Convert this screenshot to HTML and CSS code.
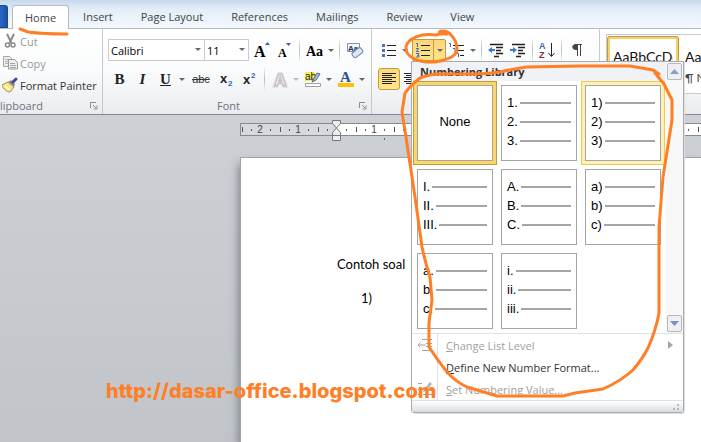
FILE: index.html
```
<!DOCTYPE html>
<html lang="en">
<head>
  <meta charset="utf-8">
  <meta name="viewport" content="width=device-width, initial-scale=1.0">
  <title>Numbering Library</title>
  <link rel="stylesheet" href="styles.css">
</head>
<body>
  <nav class="tabs">
    <button class="file-tab" aria-label="File"></button>
    <a href="#" class="tab active">Home</a>
    <a href="#" class="tab">Insert</a>
    <a href="#" class="tab">Page Layout</a>
    <a href="#" class="tab">References</a>
    <a href="#" class="tab">Mailings</a>
    <a href="#" class="tab">Review</a>
    <a href="#" class="tab">View</a>
  </nav>

  <div class="ribbon">
    <!-- Clipboard -->
    <section class="group clipboard">
      <div class="commands">
        <button class="command" disabled>
          <svg width="16" height="16" viewBox="0 0 16 16"><path d="M5 1l4.500 9M12 1L7.500 10" stroke="#8b8b8b" stroke-width="2" fill="none"/><circle cx="5.500" cy="12" r="2" fill="none" stroke="#8b8b8b" stroke-width="1.500"/><circle cx="11" cy="12" r="2" fill="none" stroke="#8b8b8b" stroke-width="1.500"/></svg>
          Cut
        </button>
        <button class="command" disabled>
          <svg width="16" height="16" viewBox="0 0 16 16"><path d="M1.500 1.500h6l2 2v8h-8z" fill="#eee" stroke="#a5a5a5"/><path d="M3 4.500h4M3 6.500h4M3 8.500h3" stroke="#b0b0b0"/><path d="M6.500 4.500h6l3 3v6.500h-9z" fill="#eee" stroke="#9a9a9a"/><path d="M8 8.500h5M8 10.500h6M8 12.500h6" stroke="#a5a5a5"/></svg>
          Copy
        </button>
        <button class="command">
          <svg width="16" height="16" viewBox="0 0 16 16"><path d="M0 8l6-3 6 5-4 5c-3 0-7-3-8-7z" fill="#f7e48a" stroke="#a98f3a"/><path d="M3 9l5 4" stroke="#fffbd8" stroke-width="2"/><path d="M6 5l3-2 4 4-1 3z" fill="#8d8d8d"/><path d="M11 5l3-3" stroke="#3f479c" stroke-width="3" stroke-linecap="round"/></svg>
          Format Painter
        </button>
      </div>
      <div class="group-label"><span>Clipboard</span><button class="launcher" aria-label="Clipboard options"><svg width="8" height="8"><path d="M.5 6V.5H6M3 3l3 3M7 3.500V7H3.500" fill="none" stroke="#8a8f96"/></svg></button></div>
    </section>

    <!-- Font -->
    <section class="group font">
      <div class="row">
        <label class="combo font-name"><select aria-label="Font"><option>Calibri</option></select><i class="arrow"></i></label>
        <label class="combo font-size"><select aria-label="Font size"><option>11</option></select><i class="arrow"></i></label>
        <button class="tool" aria-label="Grow font"><svg width="18" height="20"><text x="1" y="17" class="serif" font-size="16">A</text><path d="M12 5l2.500-3L17 5z" fill="#3a5fb0"/></svg></button>
        <button class="tool" aria-label="Shrink font"><svg width="18" height="20"><text x="2" y="17" class="serif" font-size="12">A</text><path d="M10 3h5l-2.500 3z" fill="#3a5fb0"/></svg></button>
        <i class="sep"></i>
        <button class="tool" aria-label="Change case"><svg width="20" height="20"><text x="1" y="16" class="serif" font-size="14">Aa</text></svg></button>
        <button class="drop" aria-label="Change case options"><i class="arrow"></i></button>
        <i class="sep"></i>
        <button class="tool" aria-label="Clear formatting"><svg width="18" height="18"><path d="M1.500 2.500h12v8h-12z" fill="#f4f8fd" stroke="#7d93b5"/><text x="2" y="10" font-size="8" font-weight="bold" fill="#27364f">Aa</text><rect x="6" y="9" width="11" height="6" rx="2" transform="rotate(-38 11 12)" fill="#dbe7f5" stroke="#6a83a8"/></svg></button>
      </div>
      <div class="row">
        <button class="tool letter"><b>B</b></button>
        <button class="tool letter"><em>I</em></button>
        <button class="tool letter"><u>U</u></button>
        <button class="drop" aria-label="Underline options"><i class="arrow"></i></button>
        <button class="tool strike"><s>abc</s></button>
        <button class="tool script" aria-label="Subscript"><svg width="16" height="18"><text x="1" y="13" font-size="13" font-weight="bold" fill="#222">x</text><text x="9" y="16" font-size="8" font-weight="bold" fill="#3a5fb0">2</text></svg></button>
        <button class="tool script" aria-label="Superscript"><svg width="16" height="18"><text x="1" y="14" font-size="13" font-weight="bold" fill="#222">x</text><text x="9" y="8" font-size="8" font-weight="bold" fill="#3a5fb0">2</text></svg></button>
        <i class="sep"></i>
        <button class="tool" aria-label="Text effects" disabled><svg width="18" height="20"><text x="3" y="17" font-size="17" font-weight="bold" fill="#fff" stroke="#dedade" stroke-width="3">A</text><text x="3" y="17" font-size="17" font-weight="bold" fill="#f8f8f8" stroke="#bcb7bf">A</text></svg></button>
        <button class="drop" aria-label="Text effects options" disabled><i class="arrow"></i></button>
        <button class="tool" aria-label="Highlight"><svg width="18" height="18"><path d="M1 2h10v9H1z" fill="#f5f04a"/><text x="1" y="10" font-size="10" fill="#222">ab</text><path d="M9 10l4-7 3 1-4 6-4 2z" fill="#a9bfdf" stroke="#4d668f"/><path d="M1.500 13.500h15v3h-15z" fill="#fff" stroke="#a0a0a0"/></svg></button>
        <button class="drop" aria-label="Highlight colors"><i class="arrow"></i></button>
        <button class="tool" aria-label="Font color"><svg width="18" height="18"><text x="3" y="12" class="serif" font-size="15" fill="#2f5291">A</text><path d="M1 13h16v4H1z" fill="#ffc000"/></svg></button>
        <button class="drop" aria-label="Font colors"><i class="arrow"></i></button>
      </div>
      <div class="group-label"><span>Font</span><button class="launcher" aria-label="Font options"><svg width="8" height="8"><path d="M.5 6V.5H6M3 3l3 3M7 3.500V7H3.500" fill="none" stroke="#8a8f96"/></svg></button></div>
    </section>

    <!-- Paragraph -->
    <section class="group paragraph">
      <div class="row">
        <button class="tool" aria-label="Bullets"><svg width="16" height="16"><path d="M1 2h3v3H1zM1 7h3v3H1zM1 12h3v3H1z" fill="#4d74b8"/><path d="M6 3.500h9M6 8.500h9M6 13.500h9" stroke="#222"/></svg></button>
        <button class="drop" aria-label="Bullet options"><i class="arrow"></i></button>
        <div class="split">
          <button class="split-main" aria-label="Numbering"><svg width="16" height="16"><path d="M1 1.500h1.500V5M1 6.500h2.500L1.500 9.500H4M1 11.500h3l-1.500 2h1.500v1.500H1" fill="none" stroke="#3f68b0"/><path d="M6 3.500h9M6 8.500h9M6 13.500h9" stroke="#222"/></svg></button>
          <button class="split-drop" aria-label="Numbering library"><i class="arrow"></i></button>

          <div class="menu">
            <div class="library">
              <div class="library-main">
                <h2>Numbering Library</h2>
                <div class="formats">
                  <button class="format none selected">None</button>
                  <button class="format"><span>1.</span><span>2.</span><span>3.</span></button>
                  <button class="format hover"><span>1)</span><span>2)</span><span>3)</span></button>
                  <button class="format"><span>I.</span><span>II.</span><span>III.</span></button>
                  <button class="format"><span>A.</span><span>B.</span><span>C.</span></button>
                  <button class="format"><span>a)</span><span>b)</span><span>c)</span></button>
                  <button class="format"><span>a.</span><span>b.</span><span>c.</span></button>
                  <button class="format"><span>i.</span><span>ii.</span><span>iii.</span></button>
                </div>
              </div>
              <div class="scroller">
                <button aria-label="Scroll up"><svg width="9" height="5"><path d="M0 5l4.500-5L9 5z" fill="#8e9cc4"/></svg></button>
                <button aria-label="Scroll down"><svg width="9" height="5"><path d="M0 0h9L4.500 5z" fill="#7f90c0"/></svg></button>
              </div>
            </div>
            <div class="menu-items">
              <button class="menu-item" disabled>
                <span class="menu-icon"><svg width="16" height="14"><path d="M5 1.500h10M9 5.500h6M9 8.500h6M5 12.500h10M1 7h8M3.500 4.500L1 7l2.500 2.500" fill="none" stroke="#a5a5a5"/></svg></span>
                <span><u>C</u>hange List Level</span>
                <svg class="more" width="5" height="8"><path d="M0 0l5 4-5 4z" fill="#a5a5a5"/></svg>
              </button>
              <button class="menu-item">
                <span class="menu-icon"></span>
                <span><u>D</u>efine New Number Format...</span>
              </button>
              <button class="menu-item" disabled>
                <span class="menu-icon"><svg width="16" height="16"><path d="M1 2.500h4M1 8.500h3M1 13.500h4M6 13.500h9M9 9.500h6" stroke="#a5a5a5"/><path d="M6 11l1-3 6-7 2 2-6 7z" fill="#b5b5b5"/></svg></span>
                <span><u>S</u>et Numbering Value...</span>
              </button>
            </div>
            <div class="grip"><svg width="8" height="8"><path d="M4 1h2v2H4zM4 5h2v2H4zM0 5h2v2H0z" fill="#b4b8be"/></svg></div>
          </div>
        </div>
        <button class="tool" aria-label="Multilevel list"><svg width="18" height="16"><path d="M1 1.500h1.500V5M5 6.500h2v3.500M9 11.500h1.500V15" fill="none" stroke="#3f68b0"/><path d="M5 3.500h11M9 8.500h7M12 13.500h4" stroke="#222"/></svg></button>
        <button class="drop" aria-label="Multilevel options"><i class="arrow"></i></button>
        <i class="sep"></i>
        <button class="tool" aria-label="Decrease indent"><svg width="16" height="16"><path d="M2 2.500h13M8 5.500h7M8 8.500h5M8 11.500h7M6 14.500h5" stroke="#222" stroke-width="1.500"/><path d="M0 8l4-3v2h3v2H4v2z" fill="#3f7ad0"/></svg></button>
        <button class="tool" aria-label="Increase indent"><svg width="16" height="16"><path d="M2 2.500h13M8 5.500h7M8 8.500h5M8 11.500h7M6 14.500h5" stroke="#222" stroke-width="1.500"/><path d="M7 8L3 5v2H0v2h3v2z" fill="#3f7ad0"/></svg></button>
        <i class="sep"></i>
        <button class="tool" aria-label="Sort"><svg width="16" height="20"><text x="0" y="9" font-size="9" font-weight="bold" fill="#3f68b0">A</text><text x="0" y="18" font-size="9" font-weight="bold" fill="#8c2f3a">Z</text><path d="M12.500 3v13M9.500 13l3 3.500 3-3.500" fill="none" stroke="#222"/></svg></button>
        <i class="sep"></i>
        <button class="tool" aria-label="Show marks"><svg width="14" height="16"><path d="M6 2.500h7M8.500 2v12M11.500 2v12" stroke="#444"/><path d="M9 2H7C2 2 2 8 7 8h2z" fill="#444"/></svg></button>
      </div>
      <div class="row">
        <button class="tool pressed" aria-label="Align left"><svg width="16" height="14"><path d="M1 1.500h14M1 3.500h10M1 5.500h14M1 7.500h10M1 9.500h14M1 11.500h10" stroke="#222"/></svg></button>
        <button class="tool" aria-label="Center"><svg width="16" height="14"><path d="M1 1.500h14M3 3.500h10M1 5.500h14M3 7.500h10M1 9.500h14M3 11.500h10" stroke="#222"/></svg></button>
      </div>
    </section>

    <!-- Styles -->
    <section class="group styles">
      <div class="style-list">
        <button class="style current"><span>AaBbCcDc</span></button>
        <button class="style"><span>AaBbCcDc</span><small>¶ No Spacing</small></button>
      </div>
    </section>
  </div>

  <main class="workspace">
    <div class="ruler">
      <svg width="100%" height="20">
        <defs>
          <pattern id="ticks" x="1" width="38" height="13" patternUnits="userSpaceOnUse">
            <path d="M1.500 4v5" stroke="#555"/>
            <path d="M10 6h1v2h-1zM29 6h1v2h-1z" fill="#555"/>
          </pattern>
        </defs>
        <rect width="96" height="13" fill="#d6d9de"/>
        <rect x="96" width="100%" height="13" fill="#fff"/>
        <rect width="100%" height="13" fill="url(#ticks)"/>
        <path d="M0 .5h2000M0 12.500h2000M.5 0v13" stroke="#85898e"/>
        <g class="numbers">
          <text x="20" y="10">2</text><text x="58" y="10">1</text><text x="134" y="10">1</text>
        </g>
        <path d="M144.500 15v2" stroke="#666"/>
      </svg>
      <svg class="indent" width="10" height="22"><path d="M.5.5h8v3l-4 4.500-4-4.500zM.5 15.500v-3l4-4.500 4 4.500v3zM.5 15.500h8v5h-8z" fill="#eceef0" stroke="#777"/></svg>
    </div>
    <article class="page">
      <p>Contoh soal</p>
      <p class="item">1)</p>
    </article>
  </main>

  <a href="#" class="watermark">http://dasar-office.blogspot.com</a>

  <!-- marker strokes over the window -->
  <svg class="marker" width="701" height="442" viewBox="0 0 701 442">
    <path d="M20 29q3 1 8 3 15 2 39 2"/>
    <path d="M441 34q-4-3 2-3 5 0 8 4 6 6 6 14c0 7-10 11-22 13-17 1-30-5-29-15 2-9 15-14 30-12q5-2 11-1"/>
    <path d="M659 74l-6-4-23-4-50 0-53 1q-14 2-27 5-13 2-27 2-20 0-33 0-10 0-20 4-10 8-15 15l-3 19 4 25 9 60 7 50q4 18 8 30l2 23-3 23v24q9 14 18 25 9 10 20 15l30 9h66l12-3 28-4q18-8 30-19 10-12 15-22 8-18 11-35V227l4-50 9-57v-20l-8-16-9-11"/>
  </svg>
</body>
</html>
```

FILE: styles.css
```
* { box-sizing: border-box; }
body { margin: 0; min-height: 100vh; display: flex; flex-direction: column; position: relative; overflow: hidden; font-family: "Open Sans", sans-serif; font-size: 11px; color: #333; background: #c5c9ce; }
button { font: inherit; color: inherit; background: none; border: 0; padding: 0; margin: 0; text-align: left; }
a { color: inherit; text-decoration: none; }
svg { display: block; flex: none; }
svg text { font-family: "Liberation Sans", sans-serif; }
svg text.serif { font-family: "Liberation Serif", serif; font-weight: bold; }

/* tabs */
.tabs { display: flex; align-items: flex-end; height: 29px; background: linear-gradient(#c6d8ec, #e3edf8 9px, #f3f8fd); border-bottom: 1px solid #b6babf; }
.file-tab { width: 8px; height: 23px; margin-right: 4px; background: linear-gradient(90deg, #2a67c4, #1d52a8); border: 1px solid #184a92; border-left: 0; border-radius: 0 3px 0 0; }
.tab { height: 24px; line-height: 25px; padding: 0 14px; color: #444; }
.tab.active { padding: 0 12px; margin-bottom: -1px; line-height: 23px; background: #fff; border: 1px solid #b6babf; border-bottom: 0; border-radius: 3px 3px 0 0; }

/* ribbon */
.ribbon { display: flex; height: 86px; background: linear-gradient(#fff, #fafbfc 50%, #e9ecef); border-bottom: 1px solid #85898e; }
.group { display: flex; flex-direction: column; flex: none; border-right: 1px solid #c6cad0; padding-top: 10px; }
.row { display: flex; height: 22px; margin-bottom: 7px; }
.group-label { display: flex; align-items: center; margin-top: auto; height: 17px; color: #6b727b; text-align: center; }
.group-label span { flex: 1; }
.launcher { margin-right: 4px; }

.clipboard { width: 167px; margin-left: -64px; padding-top: 1px; }
.clipboard .group-label { padding-left: 10px; }
.commands { padding-left: 66px; }
.command { display: flex; align-items: center; gap: 2px; height: 22px; white-space: nowrap; }
.command:disabled { color: #999; }

.font { width: 269px; padding-left: 5px; }
.font .group-label span { padding-right: 10px; }
.combo { position: relative; height: 22px; }
.combo select { appearance: none; width: 100%; height: 22px; margin: 0; padding: 0 2px; font: inherit; color: #000; background: #fff; border: 1px solid #c9ccd1; border-radius: 0; }
.combo .arrow { position: absolute; right: 4px; top: 9px; }
.font-name { width: 97px; }
.font-size { width: 45px; margin-left: -1px; margin-right: 1px; }
.arrow { display: block; border: 3px solid transparent; border-top-color: #666; border-bottom: 0; }
.tool { display: flex; align-items: center; justify-content: center; width: 23px; height: 22px; }
.drop { display: flex; align-items: center; justify-content: center; width: 10px; }
.drop:disabled { opacity: 0.4; }
.sep { width: 1px; margin: 0 3px; background: linear-gradient(#eee, #b9bdc2, #eee); }
.letter { font-family: "Liberation Serif", serif; font-size: 15px; font-weight: bold; color: #222; }
.strike { width: 28px; font-family: "Liberation Sans", sans-serif; color: #333; }

.paragraph { width: 228px; padding-left: 6px; }
.paragraph .tool { width: 22px; }
.pressed { background: linear-gradient(#fdd978, #ffe58c); border: 1px solid #c29b44; border-radius: 3px; }
.split { position: relative; display: flex; width: 34px; margin-left: 2px; background: linear-gradient(#fbd67a, #ffe48a); border: 1px solid #c29b44; border-radius: 2px; }
.split-main { display: flex; align-items: center; justify-content: center; width: 21px; border-right: 1px solid #c29b44; }
.split-drop { display: flex; align-items: center; justify-content: center; flex: 1; }

.styles { flex: 1; min-width: 0; padding: 5px 0 0 6px; border-right: 0; }
.style-list { display: flex; height: 60px; overflow: hidden; background: #fff; border: 1px solid #c6cad0; border-right: 0; }
.style { display: flex; flex-direction: column; flex: none; width: 72px; margin-top: 1px; padding: 8px 3px 0; overflow: hidden; border: 3px solid transparent; color: #111; font-family: Lato, sans-serif; font-size: 14px; line-height: 20px; white-space: nowrap; }
.style span { align-self: stretch; overflow: hidden; }
.style small { font-size: 12px; line-height: 24px; color: #444; }
.style.current { border-color: #f9cf67; border-radius: 3px; outline: 1px solid #c29b44; outline-offset: -1px; }

/* numbering menu */
.menu { position: absolute; top: 21px; left: -2px; z-index: 2; width: 273px; background: #fff; border: 1px solid #a7abb0; border-radius: 0 0 3px 3px; box-shadow: 1px 1px 1px #ddd; }
.library { display: flex; border-bottom: 1px solid #dfe2e5; }
.library-main { flex: 1; }
.library h2 { margin: 0; padding-left: 8px; font-size: 11px; line-height: 19px; background: #f0f2f5; color: #333; }
.formats { display: grid; grid-template-columns: repeat(3, 76px); gap: 8px; padding: 4px 5px; }
.format { height: 76px; padding: 5px 5px 8px; background: #fff; border: 1px solid #a5a5a5; font-family: "Liberation Sans", sans-serif; font-size: 13px; color: #000; }
.format span { display: flex; align-items: center; gap: 2px; height: 19px; }
.format span::after { content: ""; flex: 1; height: 2px; background: #a5a5a5; }
.format.none { text-align: center; }
.format.selected { box-shadow: 0 0 0 3px #fbd667, 0 0 0 4px #c29b44; }
.format.hover { box-shadow: 0 0 0 3px #fdf0b5, 0 0 0 4px #eecb4f; }
.scroller { display: flex; flex-direction: column; justify-content: space-between; width: 17px; background: #f8f8f8; }
.scroller button { display: flex; align-items: center; justify-content: center; width: 15px; height: 17px; margin: 1px; background: #eef0f3; border: 1px solid #b5b8bd; border-radius: 2px; }
.menu-items { background: linear-gradient(90deg, #fff 25px, #dfe2e5 25px, #dfe2e5 26px, #fff 26px); }
.menu-item { display: flex; align-items: center; width: 100%; height: 22px; }
.menu-item:disabled { color: #a0a0a0; }
.menu-icon { width: 29px; margin-right: 5px; padding-left: 5px; }
.more { margin-left: auto; margin-right: 10px; }
.grip { display: flex; align-items: center; justify-content: flex-end; height: 12px; padding-right: 2px; border-top: 1px solid #dfe2e5; background: linear-gradient(#fff, #d9dce0); }

/* document */
.workspace { flex: 1; display: flex; flex-direction: column; padding: 8px 0 0 240px; background: linear-gradient(#cdd0d5, #c1c5ca); }
.ruler { position: relative; height: 35px; }
.indent { position: absolute; left: 92px; top: -3px; }
.numbers { font-size: 10px; fill: #444; text-anchor: middle; }
.page { flex: 1; margin-left: 1px; padding: 96px 96px 0; background: #fff; box-shadow: 0 0 0 1px #9fa3a8, -2px 6px 9px #777b80; color: #000; font-family: Lato, sans-serif; font-size: 13px; line-height: 20px; }
.page p { margin: 0 0 14px; }
.page .item { padding-left: 24px; }

.watermark { position: absolute; left: 106px; top: 379px; z-index: 3; font-family: Inter, "DejaVu Sans", sans-serif; font-size: 20px; font-weight: 800; line-height: 24px; color: #ff7f27; }
.marker { position: absolute; left: 0; top: 0; z-index: 4; pointer-events: none; fill: none; stroke: #ff7f27; stroke-width: 3px; stroke-linecap: round; stroke-linejoin: round; }
```
